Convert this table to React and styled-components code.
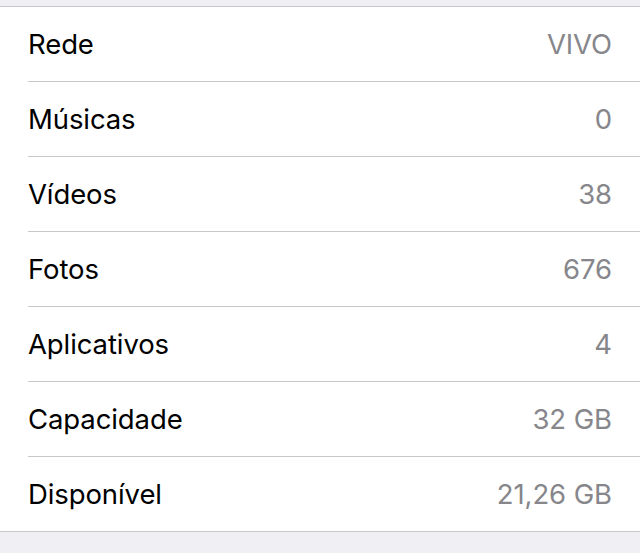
import React from 'react'
import styled, { createGlobalStyle } from 'styled-components'

const Global = createGlobalStyle`
  html, body {
    margin: 0;
    padding: 0;
    background: #efeff4;
  }
  body {
    font-family: Inter, "Liberation Sans", Arial, sans-serif;
    -webkit-font-smoothing: antialiased;
  }
`

const Page = styled.div`
  width: 640px;
  height: 553px;
  background: #efeff4;
  padding-top: 6px;
  box-sizing: border-box;
`

const Group = styled.ul`
  list-style: none;
  margin: 0;
  padding: 0 0 0 28px;
  background: #fff;
  border-top: 1px solid #c8c7cc;
  border-bottom: 1px solid #c8c7cc;
`

const Row = styled.li`
  display: flex;
  align-items: center;
  justify-content: space-between;
  height: 74px;
  padding-right: 28px;
  border-bottom: ${p => (p.$last ? 'none' : '1px solid #c8c7cc')};
  font-size: 27.5px;
  letter-spacing: -0.1px;
`

const Label = styled.span`
  color: #000;
`

const Value = styled.span`
  color: #86868b;
`

const rows = [
  ['Rede', 'VIVO'],
  ['Músicas', '0'],
  ['Vídeos', '38'],
  ['Fotos', '676'],
  ['Aplicativos', '4'],
  ['Capacidade', '32 GB'],
  ['Disponível', '21,26 GB'],
]

export default function App() {
  return (
    <Page>
      <Global />
      <Group>
        {rows.map(([label, value], i) => (
          <Row key={label} $last={i === rows.length - 1}>
            <Label>{label}</Label>
            <Value>{value}</Value>
          </Row>
        ))}
      </Group>
    </Page>
  )
}
